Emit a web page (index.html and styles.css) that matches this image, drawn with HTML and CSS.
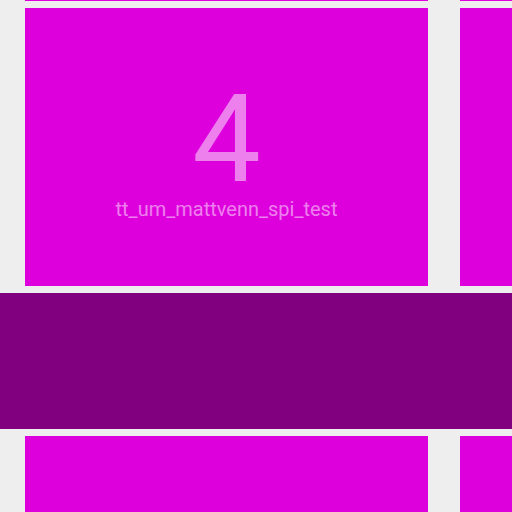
FILE: index.html
```html
<!DOCTYPE html>
<html>
<head>
<meta charset="utf-8">
<link rel="stylesheet" href="styles.css">
</head>
<body>
<div class="page">
  <div class="row">
    <div class="tile"></div>
    <div class="tile"></div>
  </div>
  <div class="row">
    <div class="tile">
      <div class="num">4</div>
      <div class="name">tt_um_mattvenn_spi_test</div>
    </div>
    <div class="tile">
      <div class="num">5</div>
      <div class="name">tt_um_tiny_tapeout_factory_tests</div>
    </div>
  </div>
  <div class="band"></div>
  <div class="row">
    <div class="tile"></div>
    <div class="tile"></div>
  </div>
</div>
</body>
</html>
```
FILE: styles.css
```css
html, body {
  margin: 0;
  padding: 0;
  height: 100%;
  overflow: hidden;
  background: #eeeeee;
  font-family: Roboto, "Noto Sans", sans-serif;
}
.page {
  display: flex;
  flex-direction: column;
  gap: 7px;
  margin-top: -277px;
}
.row {
  display: grid;
  grid-template-columns: 403px 403px;
  column-gap: 32px;
  padding-left: 25px;
}
.tile {
  box-sizing: border-box;
  height: 278px;
  padding-top: 6px;
  background: #dd00dd;
  display: flex;
  flex-direction: column;
  align-items: center;
  justify-content: center;
  color: rgba(255, 255, 255, 0.5);
  white-space: nowrap;
}
.num {
  font-size: 122px;
  line-height: 1;
}
.name {
  font-size: 20px;
  line-height: 24px;
  margin-top: -4px;
}
.band {
  height: 136px;
  background: #800080;
}
```
